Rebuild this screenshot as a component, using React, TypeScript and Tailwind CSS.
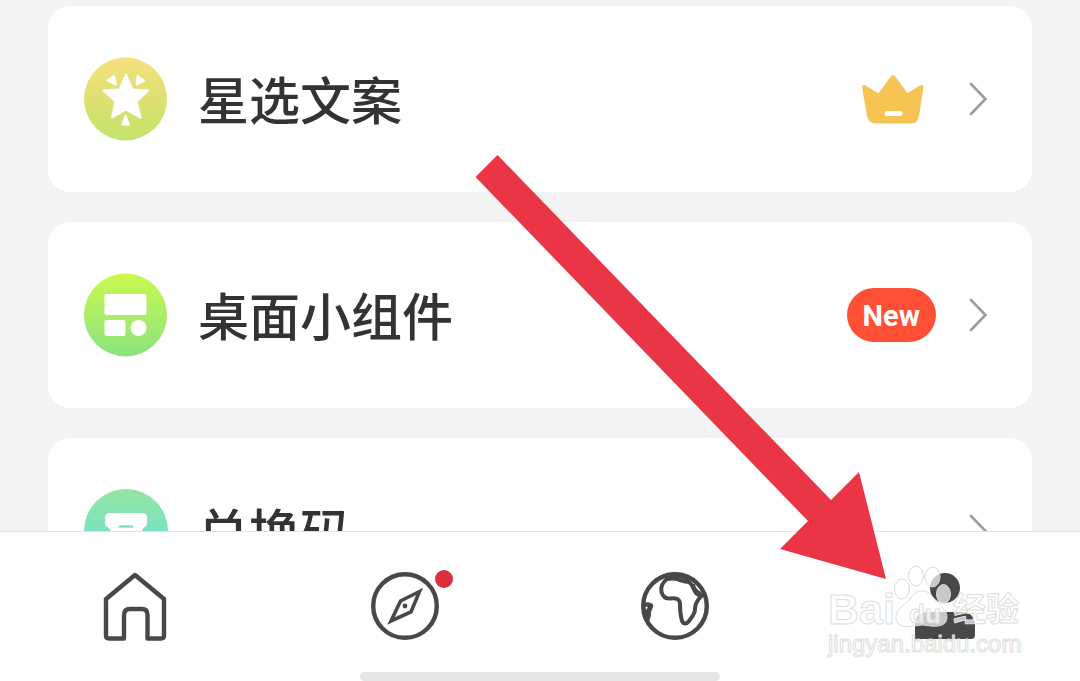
import React, { useState } from 'react';

// ─── Types ───────────────────────────────────────────────────────────

interface MenuItem {
    id: string;
    label: string;
    icon: React.ReactNode;
    extra?: React.ReactNode;
}

interface TabItem {
    id: string;
    label: string;
    icon: React.ReactNode;
    hasDot?: boolean;
}

// ─── Menu icons ──────────────────────────────────────────────────────

function StarIcon() {
    return (
        <svg viewBox="0 0 84 84" className="size-[84px] shrink-0" aria-hidden="true">
            <defs>
                <linearGradient id="star-bg" x1="0" y1="0" x2="0" y2="1">
                    <stop offset="0" stopColor="#f6e07e" />
                    <stop offset="0.5" stopColor="#dde072" />
                    <stop offset="1" stopColor="#c3e46c" />
                </linearGradient>
            </defs>
            <circle cx="41.5" cy="42" r="41.5" fill="url(#star-bg)" />
            <g fill="#fff" stroke="#fff" strokeWidth="2" strokeLinejoin="round">
                <path d="M42 18 L48.5 32.5 L64 33.5 L52.5 44.5 L56.5 60.5 L42 52.5 L28 60.5 L31.5 44.5 L19.5 33.5 L35.5 32.5Z" />
                <path d="M30 19 L23.5 23.5 L32 27.5Z" />
                <path d="M53.5 19 L60 23.5 L52.5 27.5Z" />
                <path d="M41.5 58.5 L45 67.5 L38.5 67.5Z" />
            </g>
        </svg>
    );
}

function WidgetIcon() {
    return (
        <svg viewBox="0 0 84 84" className="size-[84px] shrink-0" aria-hidden="true">
            <defs>
                <linearGradient id="widget-bg" x1="0" y1="0" x2="0" y2="1">
                    <stop offset="0" stopColor="#cbf850" />
                    <stop offset="1" stopColor="#8ae37e" />
                </linearGradient>
            </defs>
            <circle cx="41.5" cy="42" r="41.5" fill="url(#widget-bg)" />
            <g fill="#fff">
                <rect x="20.5" y="21" width="42" height="21" rx="2" />
                <rect x="20.5" y="47" width="21" height="16" rx="2" />
                <circle cx="54.5" cy="55" r="8" />
            </g>
        </svg>
    );
}

function TicketIcon() {
    return (
        <svg viewBox="0 0 84 84" className="size-[84px] shrink-0" aria-hidden="true">
            <defs>
                <linearGradient id="ticket-bg" x1="0" y1="0" x2="0" y2="1">
                    <stop offset="0" stopColor="#92e5a2" />
                    <stop offset="0.5" stopColor="#7ce3be" />
                    <stop offset="1" stopColor="#68dfd4" />
                </linearGradient>
            </defs>
            <circle cx="42" cy="42" r="42" fill="url(#ticket-bg)" />
            <path
                d="M26 24 H58 Q63 24 63 29 V34 Q63 37 60 38.5 Q56 42 60 46 Q63 47 63 50 V55 Q63 60 58 60 H26 Q21 60 21 55 V50 Q21 47 24 46 Q29 42 24 38.5 Q21 37 21 34 V29 Q21 24 26 24Z"
                fill="#fff"
            />
            <path d="M36 37.5 H48" stroke="#7ce3be" strokeWidth="2.6" strokeLinecap="round" />
        </svg>
    );
}

function CrownIcon() {
    return (
        <svg viewBox="-1 0 64 50" className="h-[50px] w-16" role="img" aria-label="VIP">
            <path
                d="M3 13 L18 22 L32 3 L46 22 L60.5 13 L56 42 Q55 47.5 50 47.5 H15 Q9 47.5 8 42Z"
                fill="#f6c453"
                stroke="#f6c453"
                strokeWidth="4"
                strokeLinejoin="round"
            />
            <path d="M26 39.5 H39" stroke="#fff" strokeWidth="5" strokeLinecap="round" />
        </svg>
    );
}

function ChevronIcon() {
    return (
        <svg viewBox="0 0 20 36" className="h-9 w-5 shrink-0" fill="none" aria-hidden="true">
            <path d="M3 3 L17.5 18 L3 33" stroke="#9c9c9c" strokeWidth="2.6" strokeLinecap="round" />
        </svg>
    );
}

function NewBadge() {
    return (
        <span className="flex h-[54px] items-center rounded-full bg-[#ff5035] px-4 pt-1 font-['Roboto',sans-serif] text-[29px] font-bold text-white">
            New
        </span>
    );
}

// ─── Tab icons ───────────────────────────────────────────────────────

function HomeIcon() {
    return (
        <svg viewBox="0 0 72 72" className="size-[72px]" fill="none" aria-hidden="true">
            <path
                d="M7 29 L36 5 L65 29 V65.5 Q65 68.5 62 68.5 H48.5 V45 Q48.5 39 43 39 H31 Q25 39 25 45 V68.5 H10 Q7 68.5 7 65.5Z"
                stroke="#484848"
                strokeWidth="4.4"
                strokeLinejoin="round"
            />
        </svg>
    );
}

function CompassIcon() {
    return (
        <svg viewBox="0 0 72 72" className="size-[72px]" fill="none" stroke="#484848" aria-hidden="true">
            <circle cx="36" cy="36" r="31.8" strokeWidth="4.4" />
            <path d="M50.5 21.5 L31.5 31 L22 51 L42 42Z" strokeWidth="3.6" />
            <circle cx="36" cy="36" r="2.4" fill="#484848" stroke="none" />
        </svg>
    );
}

function GlobeIcon() {
    return (
        <svg viewBox="0 0 72 72" className="size-[72px]" fill="none" stroke="#484848" strokeLinejoin="round" aria-hidden="true">
            <circle cx="36" cy="36" r="31.8" strokeWidth="4.4" />
            <path
                d="M29 8 C24 12 21 17 22.5 22 C24 27 27 29 31 28.5 C37 27.5 41 29 41 34 C41 40 41.5 45 42.5 49 C43.5 54 47 55 50 51 C53 47 56 44 56 39 C56 35 57 32 61 27.5 C62 26 63 25 65 24.5"
                strokeWidth="4"
            />
            <path d="M29 9 Q36 7.5 42 10.5 Q46 12 50 12 C54 15 54 19 57 23 Q60 26 64 25" strokeWidth="4" />
            <path d="M27 6.5 Q38 3 50 9" strokeWidth="5" />
            <path d="M55 14 C55 18 58 21 62 23" strokeWidth="2" />
            <path d="M4 34 Q10 31 14 35 Q13 39 11.5 42 Q12 47 9.5 51 L5.5 45Z" fill="#484848" strokeWidth="1" />
            <path d="M6.5 36.5 L9 37 L7 40Z" fill="#fff" stroke="none" />
        </svg>
    );
}

function ProfileIcon() {
    return (
        <svg viewBox="0 0 72 72" className="size-[72px]" fill="#484848" aria-hidden="true">
            <circle cx="36" cy="18" r="15" />
            <path d="M19 42 H52 Q66 42 66 56 V65 Q66 69 62 69 H6 V56 Q6 42 19 42Z" />
        </svg>
    );
}

// ─── Data ────────────────────────────────────────────────────────────

const menuItems: MenuItem[] = [
    { id: 'copywriting', label: '星选文案', icon: <StarIcon />, extra: <CrownIcon /> },
    { id: 'widgets', label: '桌面小组件', icon: <WidgetIcon />, extra: <NewBadge /> },
    { id: 'redeem', label: '兑换码', icon: <TicketIcon /> },
];

const tabs: TabItem[] = [
    { id: 'home', label: '首页', icon: <HomeIcon /> },
    { id: 'discover', label: '发现', icon: <CompassIcon />, hasDot: true },
    { id: 'world', label: '世界', icon: <GlobeIcon /> },
    { id: 'profile', label: '我的', icon: <ProfileIcon /> },
];

// ─── Menu card ───────────────────────────────────────────────────────

function MenuCard({ item }: { item: MenuItem }) {
    return (
        <button
            type="button"
            className="flex h-[186px] w-full shrink-0 items-center rounded-[22px] bg-white pr-11 pl-9 text-left"
        >
            {item.icon}
            <span className="ml-[30px] flex-1 pt-2 text-[51px] leading-[60px] text-[#333333] font-medium">{item.label}</span>
            <span className="mr-8 flex min-w-[89px] justify-center">{item.extra}</span>
            <ChevronIcon />
        </button>
    );
}

// ─── Overlays ────────────────────────────────────────────────────────

function PointerArrow() {
    return (
        <svg
            viewBox="0 0 412 426"
            className="pointer-events-none absolute top-[154px] left-[475px] h-[426px] w-[412px]"
            aria-hidden="true"
        >
            <path d="M22.5 1 L0.5 23 L333 367 L305 395 L411 425 L384 318 L356 346Z" fill="#ea3546" />
        </svg>
    );
}

function Watermark() {
    return (
        <div className="pointer-events-none absolute top-[564px] left-[828px] h-24 w-[196px] text-white/70 [-webkit-text-stroke:1px_#dedede]">
            <svg
                viewBox="0 0 196 96"
                className="absolute inset-0 h-24 w-[196px]"
                fill="#fff"
                fillOpacity="0.7"
                stroke="#dadada"
                aria-hidden="true"
            >
                <ellipse cx="74" cy="25" rx="7.5" ry="10" />
                <ellipse cx="88" cy="12" rx="7.5" ry="10" />
                <ellipse cx="104.5" cy="13" rx="7.5" ry="10" />
                <ellipse cx="115.5" cy="30" rx="7" ry="9.5" />
                <path d="M94 27 C86 27 84 34 78 39 C71 44 67 49 68 55 C70 64 79 63 86 62 Q94 60 103 62 C112 63 119 61 119 53 C119 46 113 42 108 37 C103 32 102 27 94 27Z" />
            </svg>
            <span className="absolute top-[25px] left-0 text-[43px] leading-10 font-bold">Bai</span>
            <span className="absolute top-[34px] left-[81px] text-[26px] leading-8 font-bold">du</span>
            <span className="absolute top-[27px] left-[125px] text-[33px] leading-[38px] font-bold">经验</span>
            <span className="absolute top-[66px] left-0 font-['Liberation_Sans',sans-serif] text-2xl leading-7">
                jingyan.baidu.com
            </span>
        </div>
    );
}

// ─── Page ────────────────────────────────────────────────────────────

export default function App() {
    const [activeTab, setActiveTab] = useState('profile');

    return (
        <div className="relative flex h-screen flex-col overflow-hidden bg-[#f3f3f3] font-['Liberation_Sans','Noto_Sans_CJK_SC',sans-serif]">
            <main className="flex min-h-0 flex-1 flex-col gap-[30px] overflow-hidden px-12 pt-1.5">
                {menuItems.map((item) => (
                    <MenuCard key={item.id} item={item} />
                ))}
            </main>

            <nav className="flex shrink-0 flex-col items-center border-t border-[#e2e2e2] bg-white">
                <div className="grid w-full grid-cols-4 pt-[38px] pb-[30px]">
                    {tabs.map((tab) => (
                        <button
                            key={tab.id}
                            type="button"
                            aria-label={tab.label}
                            aria-current={tab.id === activeTab ? 'page' : undefined}
                            onClick={() => setActiveTab(tab.id)}
                            className="flex justify-center"
                        >
                            <span className="relative">
                                {tab.icon}
                                {tab.hasDot && (
                                    <span className="absolute top-0 -right-3 size-[18px] rounded-full bg-[#dc2f3c]" />
                                )}
                            </span>
                        </button>
                    ))}
                </div>
                <div className="h-[9px] w-1/3 rounded-full bg-[#e6e6e6]" />
            </nav>

            <PointerArrow />
            <Watermark />
        </div>
    );
}
